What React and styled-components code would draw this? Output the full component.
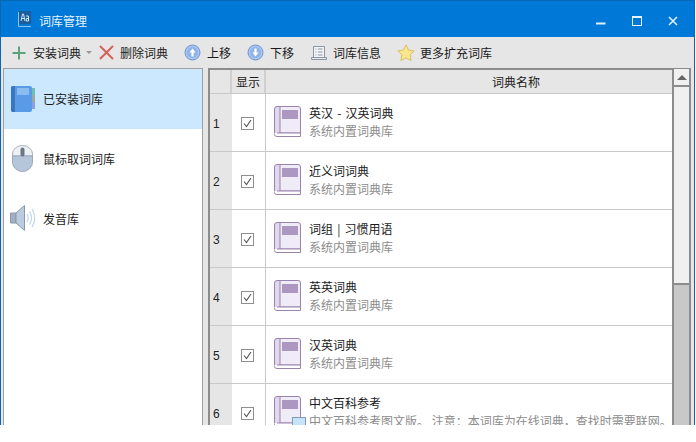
import React from "react";
import styled, { createGlobalStyle } from "styled-components";

const Global = createGlobalStyle`
  html, body { margin: 0; padding: 0; background: #fff; }
  body { font-family: "Noto Sans CJK SC", "Liberation Sans", sans-serif; font-size: 12px; color: #1a1a1a; }
`;

const Win = styled.div`
  width: 695px; height: 425px; box-sizing: border-box; overflow: hidden;
  display: flex; flex-direction: column;
  border: 1px solid #0a66b0; border-bottom: 0; background: #e6e6e6;
`;
const Title = styled.header`
  height: 36px; flex: none; background: #0078d7; color: #fff;
  display: flex; align-items: center; padding: 0 3px 0 17px; gap: 8px; font-size: 12px;
`;
const TitleText = styled.span`flex: 1; color: #e8f3fc; padding-top: 2px;`;
const WinBtns = styled.div`display: flex; height: 100%;`;
const WinBtn = styled.div`
  width: 36px; height: 100%; padding-top: 4px; box-sizing: border-box;
  display: flex; align-items: center; justify-content: center;
  svg { display: block; }
`;
const Toolbar = styled.nav`
  height: 31px; flex: none; display: flex; align-items: center; padding-left: 10px;
`;
const Tool = styled.div`
  display: flex; align-items: center; gap: ${p => p.$gap ?? 5}px; margin-right: ${p => p.$mr ?? 0}px; margin-left: ${p => p.$ml ?? 0}px; white-space: nowrap; line-height: 16px;
`;
const Caret = styled.span`
  width: 0; height: 0; border: 3px solid transparent; border-top: 3px solid #999; border-bottom: 0; margin-left: -1px;
`;
const Main = styled.div`flex: 1; min-height: 0; display: flex; padding: 0 3px 0 2px; gap: 5px;`;
const Side = styled.aside`
  width: 200px; flex: none; background: #fff; border: 1px solid #a0a0a0; border-bottom: 0; box-sizing: border-box;
`;
const SideItem = styled.div`
  height: 60px; box-sizing: border-box; padding: 0 0 2px 5px; display: flex; align-items: center; gap: 7px;
  background: ${p => (p.$active ? "#cce8ff" : "transparent")};
`;
const IconBox = styled.span`width: 27px; height: 30px; flex: none; display: flex; align-items: center; justify-content: center;`;
const Grid = styled.section`
  flex: 1; min-width: 0; display: flex; border: 1px solid #8c8c8c; border-width: 2px 0 0 2px; background: #fff;
`;
const Table = styled.div`flex: 1; min-width: 0; overflow: hidden; display: flex; flex-direction: column;`;
const HeadRow = styled.div`
  height: 23px; flex: none; display: grid; grid-template-columns: 22px 34px 1fr; background: #e6e6e6; border-bottom: 1px solid #c8c8c8;
`;
const HeadCell = styled.div`
  display: flex; align-items: center; justify-content: center; border-right: 2px solid #d0d0d0;
  &:last-child { border-right: 0; padding-left: 94px; }
`;
const Row = styled.div`
  height: 57px; flex: none; display: grid; grid-template-columns: 22px 34px 1fr; border-bottom: 1px solid #c8c8c8;
`;
const NumCell = styled.div`
  background: #e6e6e6; display: flex; align-items: center; padding: 3px 0 0 3px; font-family: "Liberation Sans", sans-serif; font-size: 12px; color: #222;
`;
const CheckCell = styled.div`
  display: flex; align-items: center; justify-content: center; border-right: 1px solid #c8c8c8; padding: 2px 2px 0 0;
`;
const CheckBox = styled.span`
  width: 11px; height: 11px; border: 1px solid #8f8f8f; background: #fff; display: flex; align-items: center; justify-content: center;
`;
const NameCell = styled.div`display: flex; align-items: center; padding-left: 8px; gap: 8px;`;
const BookWrap = styled.span`
  position: relative; width: 27px; height: 32px; flex: none; display: block; margin-top: -1px;
`;
const Badge = styled.span`
  position: absolute; left: 18px; top: 21px; width: 14px; height: 14px; background: #c5e3f9; border: 1px solid #7f9db9; box-sizing: border-box;
`;
const Info = styled.div`display: flex; flex-direction: column; gap: 2px; padding-bottom: 2px; white-space: nowrap; min-width: 0;`;
const Name = styled.div`line-height: 16px; color: #1a1a1a; word-spacing: 1.5px;`;
const Sub = styled.div`line-height: 16px; color: #8c8c8c;`;
const Scroll = styled.div`
  width: 15px; flex: none; box-sizing: content-box; display: flex; flex-direction: column; background: #c8c8c8;
  border: 2px solid #8c8c8c; border-width: 0 2px; margin-top: -1px;
`;
const ScrollBtn = styled.div`
  height: 16px; flex: none; background: #f0f0f0; border-bottom: 2px solid #8c8c8c; display: flex; align-items: center; justify-content: center;
`;
const ScrollUp = styled.span`
  width: 0; height: 0; border: 5px solid transparent; border-top: 0; border-bottom: 5px solid #666;
`;
const Thumb = styled.div`height: 196px; flex: none; background: #f0f0f0; border-bottom: 2px solid #8c8c8c;`;

const Round = ({ down }) => (
  <svg width="17" height="17" viewBox="0 0 17 17">
    <circle cx="8.5" cy="8.5" r="7.5" fill="#a9c6ee" stroke="#6f93cf" />
    <circle cx="8.5" cy="8.5" r="5.5" fill="#8fb4e8" />
    <path d={down ? "M7.4 4.5h2.2v4h2L8.5 12.5 5.4 8.5h2z" : "M7.4 12.5h2.2v-4h2L8.5 4.5 5.4 8.5h2z"} fill="#fff" />
  </svg>
);
const Book = () => (
  <svg width="27" height="32" viewBox="0 0 27 32">
    <path d="M3.5 27V3q0-2.500 2.500-2.500h18q2.500 0 2.500 2.500v24z" fill="#efebf7" stroke="#9a83ae" />
    <path d="M.5 27V3Q.5.500 3 .5h3v27H3" fill="#e2d8ee" stroke="#9a83ae" />
    <path d="M.5 27.500v1q0 2 2.500 2h23.500v-3.500H3" fill="#fff" stroke="#9a83ae" />
    <rect x="8" y="4" width="16" height="9" fill="#ab97bf" />
  </svg>
);
const Check = () => (
  <svg width="9" height="9" viewBox="0 0 9 9">
    <path d="M1 4.500 3.500 7.500 8 1" fill="none" stroke="#555" strokeWidth="1.100" />
  </svg>
);

const rows = [
  ["英汉 - 汉英词典", "系统内置词典库"],
  ["近义词词典", "系统内置词典库"],
  ["词组 | 习惯用语", "系统内置词典库"],
  ["英英词典", "系统内置词典库"],
  ["汉英词典", "系统内置词典库"],
  ["中文百科参考", "中文百科参考图文版。 注意：本词库为在线词典，查找时需要联网。", true],
];

export default function App() {
  return (
    <>
      <Global />
      <Win>
        <Title>
          <svg width="13" height="16" viewBox="0 0 13 16">
            <path d="M1 0h12v13H1z" fill="#1b5e9e" />
            <path d="M0 1h1v14h13v1H1q-1 0-1-1z" fill="#8fc3ea" />
            <path d="M3 10l1.500-7h1L7 10M3.800 7.500h2.400M8 5h2.500v5H8.300V7.500h2.200" fill="none" stroke="#e8f3fc" strokeWidth="0.900" />
          </svg>
          <TitleText>词库管理</TitleText>
          <WinBtns>
            <WinBtn>
              <svg width="10" height="10" viewBox="0 0 10 10"><path d="M0 7.500h9.500" stroke="#dfeefb" strokeWidth="2" /></svg>
            </WinBtn>
            <WinBtn>
              <svg width="10" height="10" viewBox="0 0 10 10"><rect x=".5" y=".5" width="9" height="9" fill="none" stroke="#e8f3fc" /><path d="M0 1h10" stroke="#e8f3fc" strokeWidth="2" /></svg>
            </WinBtn>
            <WinBtn>
              <svg width="10" height="10" viewBox="0 0 10 10"><path d="M1 1l8 8M9 1l-8 8" stroke="#e8f3fc" strokeWidth="1.500" /></svg>
            </WinBtn>
          </WinBtns>
        </Title>
        <Toolbar>
          <Tool $gap={6}>
            <svg width="16" height="16" viewBox="0 0 16 16"><path d="M8 1.500v13M1.500 8h13" stroke="#5fa27a" strokeWidth="2" /></svg>
            <span>安装词典</span>
            <Caret />
          </Tool>
          <Tool $gap={6} $mr={16} $ml={7}>
            <svg width="15" height="15" viewBox="0 0 15 15"><path d="M1 1l13 13M14 1 1 14" stroke="#d9605a" strokeWidth="2" /></svg>
            <span>删除词典</span>
          </Tool>
          <Tool $gap={6} $mr={16}>
            <Round />
            <span>上移</span>
          </Tool>
          <Tool $gap={6} $mr={17}>
            <Round down />
            <span>下移</span>
          </Tool>
          <Tool $gap={6} $mr={16}>
            <svg width="16" height="16" viewBox="0 0 16 16">
              <path d="M2.500 12.500v-11h11v11" fill="#f3f4f6" stroke="#8b95a3" />
              <path d="M.5 12.500h15v2H.5z" fill="#e6e8ec" stroke="#8b95a3" />
              <path d="M4.500 4h1M4.500 7h1M4.500 10h1M7 4h4.500M7 7h4.500M7 10h4.500" stroke="#8b95a3" />
            </svg>
            <span>词库信息</span>
          </Tool>
          <Tool $gap={5}>
            <svg width="18" height="17" viewBox="0 0 18 17"><path d="M9 .8l2.500 5.300 5.700.8-4.100 4 1 5.700L9 13.900l-5.100 2.700 1-5.700-4.100-4 5.700-.8z" fill="#fbe68c" stroke="#d6c069" /></svg>
            <span>更多扩充词库</span>
          </Tool>
        </Toolbar>
        <Main>
          <Side>
            <SideItem $active>
              <IconBox>
                <svg width="24" height="27" viewBox="0 0 24 27">
                  <rect x="20" y="3" width="4" height="7" fill="#6fbfae" />
                  <rect x="20" y="10" width="4" height="7" fill="#9aa9a0" />
                  <rect x="20" y="17" width="4" height="7" fill="#8c9fe0" />
                  <rect x="0" y="1" width="21" height="26" rx="2" fill="#5a9be8" />
                  <path d="M2 1h2v26H2q-2 0-2-2V3q0-2 2-2z" fill="#3a75c0" />
                  <rect x="6" y="3" width="12" height="7" fill="#8bbcf0" />
                </svg>
              </IconBox>
              <span>已安装词库</span>
            </SideItem>
            <SideItem>
              <IconBox>
                <svg width="21" height="27" viewBox="0 0 21 27">
                  <path d="M.5 11V9a10 8.500 0 0 1 20 0v2z" fill="#eef0f4" stroke="#aab4c2" />
                  <path d="M.5 11h20v6a10 9.500 0 0 1-20 0z" fill="#b5c5da" stroke="#9aa8ba" />
                  <rect x="8.500" y="2.500" width="4" height="9" rx="2" fill="#6c7684" />
                </svg>
              </IconBox>
              <span>鼠标取词词库</span>
            </SideItem>
            <SideItem>
              <IconBox>
                <svg width="26" height="26" viewBox="0 0 26 26">
                  <path d="M.5 8h5.500v10H.5z" fill="#a2b0c4" stroke="#8b98aa" />
                  <path d="M6 8 14.500.5v25L6 18z" fill="#bccbe0" stroke="#8b98aa" />
                  <path d="M17 9q2.500 4 0 8M19.500 6.500q4 6.500 0 13M22 4q5.500 9 0 18" fill="none" stroke="#bcd3ee" strokeWidth="1.100" />
                </svg>
              </IconBox>
              <span>发音库</span>
            </SideItem>
          </Side>
          <Grid>
            <Table>
              <HeadRow>
                <HeadCell />
                <HeadCell>显示</HeadCell>
                <HeadCell>词典名称</HeadCell>
              </HeadRow>
              {rows.map(([n, s, badge], i) => (
                <Row key={n}>
                  <NumCell>{i + 1}</NumCell>
                  <CheckCell>
                    <CheckBox><Check /></CheckBox>
                  </CheckCell>
                  <NameCell>
                    <BookWrap>
                      <Book />
                      {badge && <Badge />}
                    </BookWrap>
                    <Info>
                      <Name>{n}</Name>
                      <Sub>{s}</Sub>
                    </Info>
                  </NameCell>
                </Row>
              ))}
            </Table>
            <Scroll>
              <ScrollBtn><ScrollUp /></ScrollBtn>
              <Thumb />
            </Scroll>
          </Grid>
        </Main>
      </Win>
    </>
  );
}
